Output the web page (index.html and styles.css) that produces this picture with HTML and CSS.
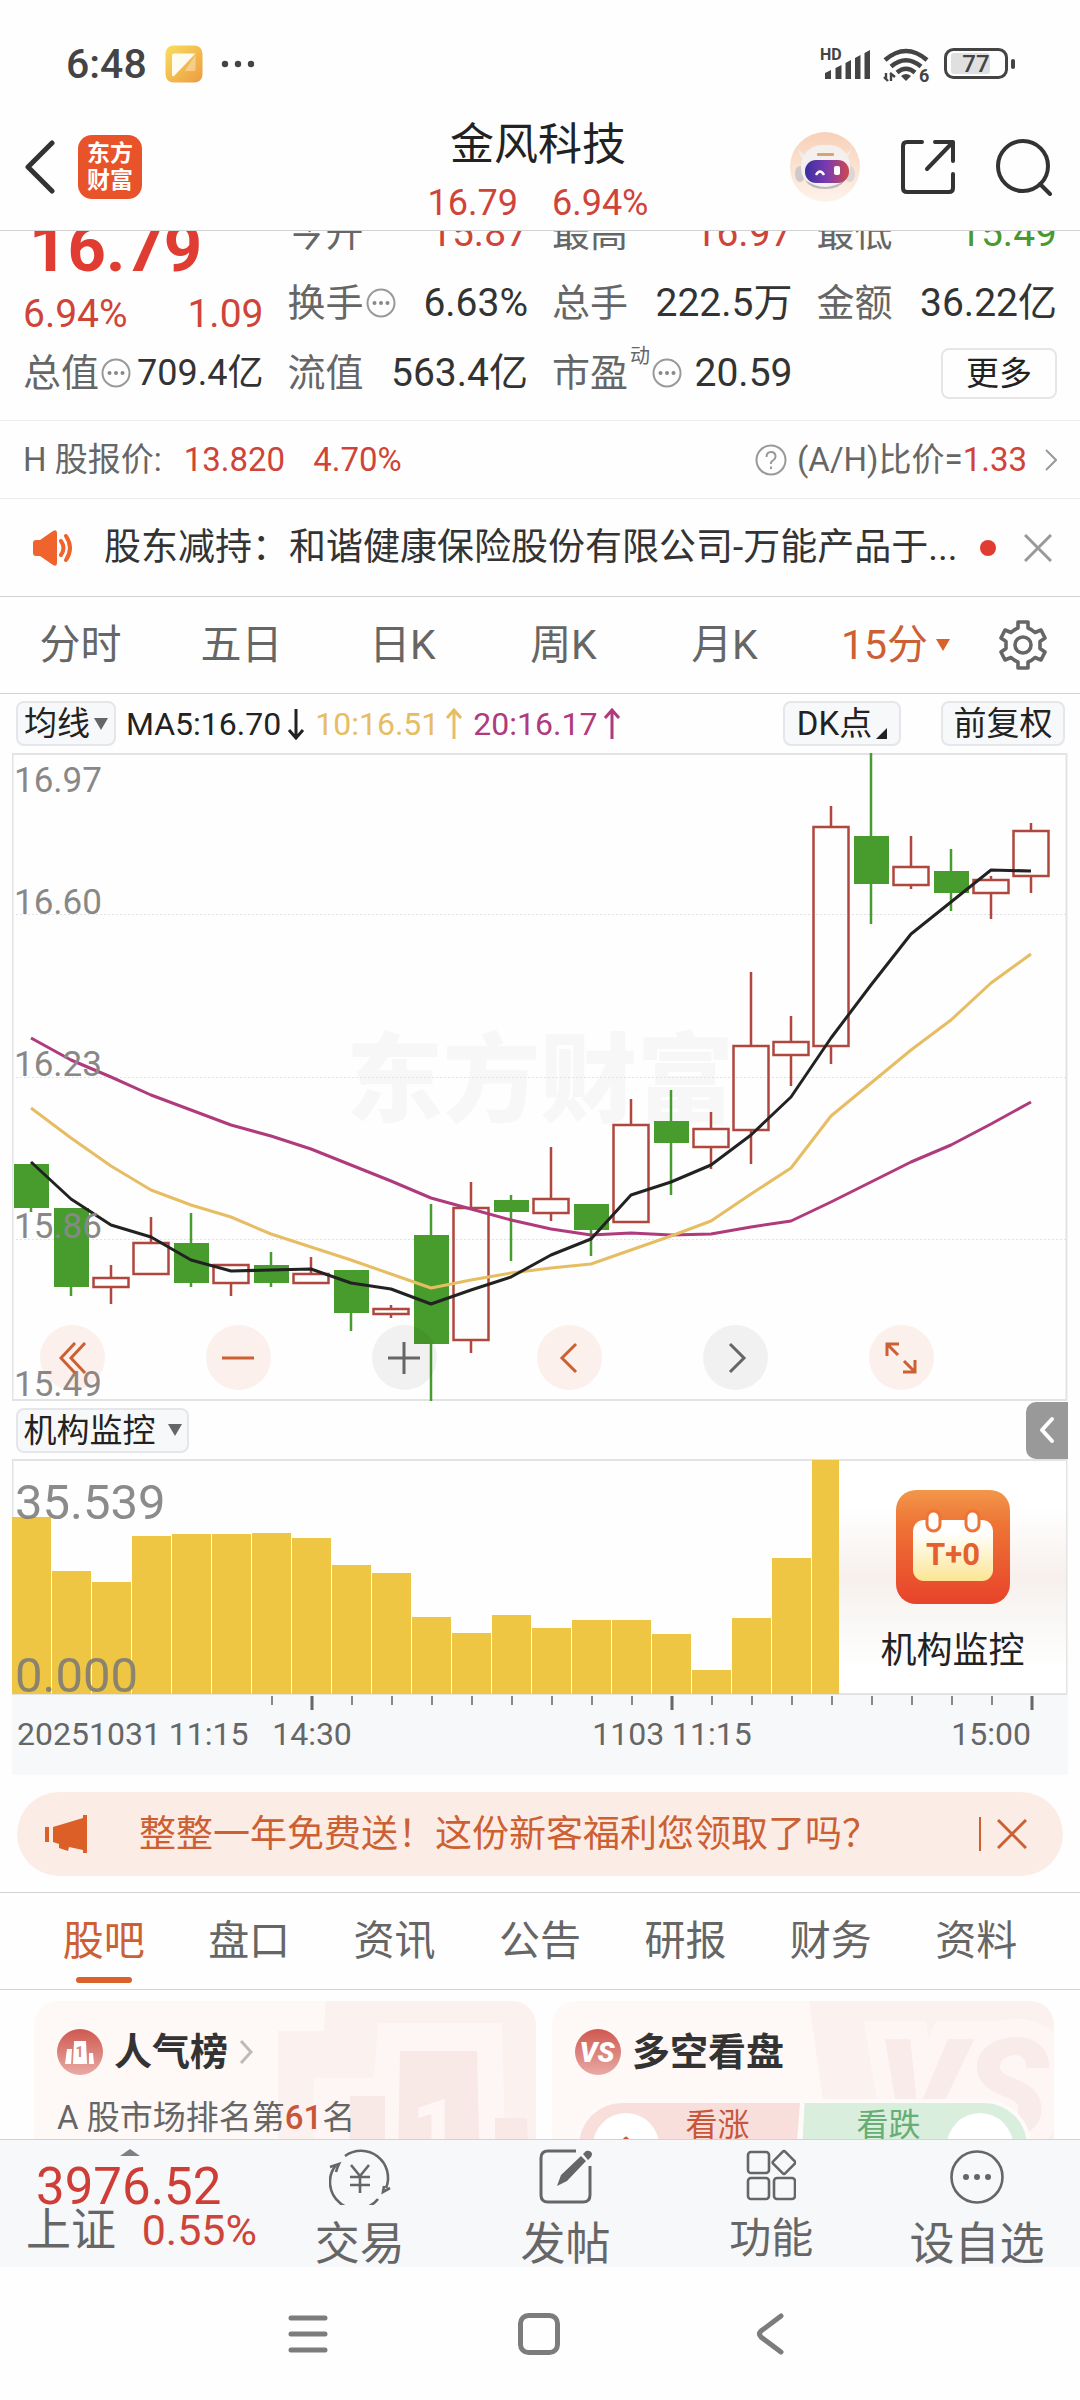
FILE: index.html
```html
<!DOCTYPE html>
<html lang="zh-CN">
<head>
<meta charset="utf-8">
<meta name="viewport" content="width=device-width, initial-scale=1">
<title>金风科技</title>
<link rel="stylesheet" href="styles.css">
</head>
<body>
<div class="app">
  <div class="status">
    <div class="status-left">
      <span class="clock">6:48</span>
      <svg width="38" height="38" viewBox="0 0 38 38"><defs><linearGradient id="note" x1="0" y1="0" x2="1" y2="1"><stop offset="0" stop-color="#f7df5c"/><stop offset="1" stop-color="#ee9a42"/></linearGradient></defs><rect width="37" height="37" x=".5" y=".5" rx="8" fill="url(#note)"/><path d="M20 26h9a1.500 1.500 0 0 0 1.500-1.500V10z" fill="#fff" opacity=".35"/><path d="M7 10.500Q7 8.500 9 8.500H30.500L9 31Q7 32 7 30z" fill="#fff" opacity=".92"/></svg>
      <svg width="34" height="8" viewBox="0 0 34 8" fill="#444"><circle cx="4" cy="4" r="3.200"/><circle cx="17" cy="4" r="3.200"/><circle cx="30" cy="4" r="3.200"/></svg>
    </div>
    <svg width="198" height="48" viewBox="818 40 198 48" fill="#444">
      <text x="820" y="60" font-size="16" font-weight="700" class="num">HD</text>
      <path d="M825 73l6-3v9h-6zM835.500 68l6-3v14h-6zM845.500 63l5.500-3v19h-5.500zM855 58l5.500-3v24H855zM864.500 53l5.500-3v29h-5.500z"/>
      <g fill="none" stroke="#444" stroke-width="4.500"><path d="M885 60Q906 42 927 60"/><path d="M891 66.500Q906 54 921 66.500"/><path d="M897 72.500Q906 65 915 72.500"/></g>
      <path d="M901 76q5-4 10 0l-5 5z"/><path d="M886 73v7M891 73v8M884 77l4 4M890 73l5 4" stroke="#444" stroke-width="2.400"/>
      <text x="919" y="82" font-size="18" font-weight="700" class="num">6</text>
      <rect x="945.500" y="49.500" width="61" height="28" rx="8" fill="none" stroke="#444" stroke-width="3"/>
      <rect x="951" y="53" width="39" height="21" rx="3" fill="#e0e0e0"/><rect x="1011" y="59" width="4" height="10" rx="2"/>
      <text x="976" y="72" font-size="24" text-anchor="middle" font-weight="500" class="num">77</text>
    </svg>
  </div>

  <header class="head">
    <div class="head-left">
      <button class="plain" aria-label="返回"><svg width="32" height="54" viewBox="0 0 32 54"><path d="M28 3L4 27L28 51" fill="none" stroke="#333" stroke-width="5" stroke-linecap="round" stroke-linejoin="round"/></svg></button>
      <a class="brand" href="#"><span>东方</span><span>财富</span></a>
    </div>
    <div class="head-mid">
      <h1>金风科技</h1>
      <div class="head-price"><span>16.79</span><span>6.94%</span></div>
    </div>
    <div class="head-right">
      <button class="plain" aria-label="智能助手"><svg width="70" height="70" viewBox="0 0 70 70"><defs><linearGradient id="av" x1="0" y1="0" x2="0" y2="1"><stop offset="0" stop-color="#f8d0b6"/><stop offset="1" stop-color="#fdf3ec"/></linearGradient><linearGradient id="vis"><stop offset="0" stop-color="#3b2f9e"/><stop offset=".5" stop-color="#7b3bb0"/><stop offset="1" stop-color="#d0484e"/></linearGradient></defs><circle cx="35" cy="35" r="35" fill="url(#av)"/><path d="M8 14q1 8 8 8v7q-8-3-8-15zM61 14q-1 8-8 8v7q8-3 8-15z" fill="#f1ece9"/><ellipse cx="10" cy="42" rx="5" ry="8" fill="#cfcaca"/><ellipse cx="60" cy="42" rx="5" ry="8" fill="#dcd6d4"/><rect x="11" y="13" width="49" height="44" rx="21" fill="#f3f0ef"/><path d="M15 48q20 14 40 0q-5 9-20 9t-20-9z" fill="#bdb9b9"/><rect x="27" y="21" width="17" height="3" rx="1" fill="#d9a36b"/><rect x="15" y="28" width="44" height="23" rx="11" fill="url(#vis)"/><path d="M26 43q4-7 8 0" fill="none" stroke="#fff" stroke-width="2.500"/><rect x="44" y="34" width="6" height="9" rx="2" fill="#fff"/></svg></button>
      <button class="plain" aria-label="分享"><svg width="54" height="56" viewBox="0 0 54 56" fill="none" stroke="#333" stroke-width="4" stroke-linecap="round" stroke-linejoin="round"><path d="M21 3H6Q2 3 2 7V49Q2 53 6 53H48Q52 53 52 49V35M34 3H52V22M51 4L26 30"/></svg></button>
      <button class="plain" aria-label="搜索"><svg width="56" height="58" viewBox="0 0 56 58" fill="none" stroke="#333" stroke-width="4" stroke-linecap="round"><circle cx="27" cy="28" r="25"/><path d="M44 46L54 56"/></svg></button>
    </div>
  </header>

  <main class="body">
    <section class="quote">
      <div class="q-main">
        <strong class="q-price">16.79</strong>
        <div class="q-change"><span>6.94%</span><span>1.09</span></div>
        <div class="q-cell"><span class="lab">总值<svg class="dots"><use href="#i-dots"/></svg></span><span class="small">709.4亿</span></div>
      </div>
      <div class="q-col">
        <div class="q-cell"><span class="lab">今开</span><span class="red">15.87</span></div>
        <div class="q-cell"><span class="lab">换手<svg class="dots"><use href="#i-dots"/></svg></span><span>6.63%</span></div>
        <div class="q-cell"><span class="lab">流值</span><span>563.4亿</span></div>
      </div>
      <div class="q-col">
        <div class="q-cell"><span class="lab">最高</span><span class="red">16.97</span></div>
        <div class="q-cell"><span class="lab">总手</span><span>222.5万</span></div>
        <div class="q-cell"><span class="lab">市盈<sup>动</sup><svg class="dots"><use href="#i-dots"/></svg></span><span>20.59</span></div>
      </div>
      <div class="q-col">
        <div class="q-cell"><span class="lab">最低</span><span class="green">15.49</span></div>
        <div class="q-cell"><span class="lab">金额</span><span>36.22亿</span></div>
        <div class="q-cell end"><button class="more">更多</button></div>
      </div>
    </section>

    <section class="hrow">
      <span>H 股报价:</span><span class="red h1">13.820</span><span class="red h2">4.70%</span>
      <a href="#" class="ratio"><svg width="32" height="32" viewBox="0 0 32 32" fill="none" stroke="#999" stroke-width="2"><circle cx="16" cy="16" r="14.500"/><path d="M11.500 13q0-5 4.500-5t4.500 4.500q0 2.500-2.500 4t-2 3.500M16 22.500v2.500"/></svg><span>(A/H)比价=<b>1.33</b></span><svg width="12" height="22" viewBox="0 0 12 22"><path d="M1 1l10 10L1 21" fill="none" stroke="#999" stroke-width="2"/></svg></a>
    </section>

    <section class="news">
      <svg width="42" height="36" viewBox="0 0 42 36"><path d="M4 10Q1 10 1 13v10q0 3 3 3h4l13 9q4 2 4-2V3q0-4-4-2L8 10z" fill="#ee642c"/><path d="M29 11q5 7 0 14M34 6q8 12 0 24" fill="none" stroke="#ee642c" stroke-width="4" stroke-linecap="round"/></svg>
      <a href="#">股东减持：和谐健康保险股份有限公司-万能产品于...</a>
      <i class="dot"></i>
      <button class="plain" aria-label="关闭"><svg width="28" height="28" viewBox="0 0 28 28"><path d="M1 1L27 27M27 1L1 27" stroke="#999" stroke-width="3"/></svg></button>
    </section>

    <nav class="periods">
      <button>分时</button><button>五日</button><button>日K</button><button>周K</button><button>月K</button>
      <button class="on">15分<svg width="14" height="12" viewBox="0 0 14 12"><path d="M0 0h14L7 12z" fill="#d9622b"/></svg></button>
      <button aria-label="设置"><svg width="48" height="50" viewBox="0 0 48 50" fill="none" stroke="#666" stroke-width="3.600" stroke-linejoin="round"><path d="M19 2h10v6q4 1.500 7 4.500l6-2.500 4 8-5 3.500v7l5 3.500-4 8-6-2.500q-3 3-7 4.500v6H19v-6q-4-1.500-7-4.500l-6 2.500-4-8 5-3.500v-7l-5-3.500 4-8 6 2.500q3-3 7-4.500z"/><circle cx="24" cy="25" r="8"/></svg></button>
    </nav>

    <section class="ind">
      <button class="chip">均线<svg width="14" height="12" viewBox="0 0 14 12"><path d="M0 0h14L7 12z" fill="#666"/></svg></button>
      <span class="ma">MA5:16.70<svg width="18" height="32" viewBox="0 0 18 32"><path d="M9 1v29M2 22l7 8 7-8" fill="none" stroke="currentColor" stroke-width="3"/></svg></span>
      <span class="ma gold">10:16.51<svg width="18" height="32" viewBox="0 0 18 32"><path d="M9 31V2M2 10l7-8 7 8" fill="none" stroke="currentColor" stroke-width="3"/></svg></span>
      <span class="ma pink">20:16.17<svg width="18" height="32" viewBox="0 0 18 32"><path d="M9 31V2M2 10l7-8 7 8" fill="none" stroke="currentColor" stroke-width="3"/></svg></span>
      <button class="chip dk">DK点<svg width="11" height="11" viewBox="0 0 11 11"><path d="M11 0v11H0z" fill="#222"/></svg></button>
      <button class="chip fq">前复权</button>
    </section>

    <section class="chart">
      <svg class="plot" viewBox="12 753 1056 648">
        <text x="346" y="1114" class="mark">东方财富</text>
        <g stroke="#e3e3e3" stroke-dasharray="2 2"><path d="M12 914.500H1068M12 1077.500H1068M12 1239.500H1068"/></g>
        <rect x="12.500" y="754" width="1054" height="646" fill="none" stroke="#e3e3e3" stroke-width="2"/>
        <g fill="none" stroke="#b0473f" stroke-width="2.500">
          <path d="M111 1265V1278M111 1287V1304M151 1217V1243M231 1283V1296M311 1257V1274M391 1305V1309M391 1314V1318M471 1182V1208M471 1340V1353M551 1147V1199M551 1213V1221M631 1099V1125M711 1112V1129M711 1147V1169M751 972V1046M751 1130V1164M791 1016V1042M791 1055V1086M831 806V827M831 1046V1064M911 836V867M911 885V889M991 876V880M991 893V919M1031 823V831M1031 876V893"/>
          <rect x="93.500" y="1278" width="35" height="9"/><rect x="133.500" y="1243" width="35" height="31"/><rect x="213.500" y="1265" width="35" height="18"/><rect x="293.500" y="1274" width="35" height="9"/><rect x="373.500" y="1309" width="35" height="5"/><rect x="453.500" y="1208" width="35" height="132"/><rect x="533.500" y="1199" width="35" height="14"/><rect x="613.500" y="1125" width="35" height="97"/><rect x="693.500" y="1129" width="35" height="18"/><rect x="733.500" y="1046" width="35" height="84"/><rect x="773.500" y="1042" width="35" height="13"/><rect x="813.500" y="827" width="35" height="219"/><rect x="893.500" y="867" width="35" height="18"/><rect x="973.500" y="880" width="35" height="13"/><rect x="1013.500" y="831" width="35" height="45"/>
        </g>
        <g fill="#489c2d" stroke="none">
          <rect x="14" y="1164" width="35" height="44"/><rect x="54" y="1208" width="35" height="79"/><rect x="174" y="1243" width="35" height="40"/><rect x="254" y="1265" width="35" height="18"/><rect x="334" y="1270" width="35" height="43"/><rect x="414" y="1235" width="35" height="109"/><rect x="494" y="1200" width="35" height="12"/><rect x="574" y="1204" width="35" height="26"/><rect x="654" y="1121" width="35" height="22"/><rect x="854" y="836" width="35" height="48"/><rect x="934" y="871" width="35" height="22"/>
        </g>
        <path d="M31 1164V1212M71 1208V1296M191 1213V1287M271 1252V1287M351 1270V1331M431 1204V1401M511 1195V1261M591 1204V1256M671 1090V1195M871 753V924M951 849V911" stroke="#489c2d" stroke-width="2.500"/>
        <g fill="none" stroke-width="3" stroke-linejoin="round">
          <polyline stroke="#b03b7c" points="31,1038 71,1060 111,1077 151,1095 191,1110 231,1125 271,1136 311,1149 351,1165 391,1181 431,1198 471,1209 511,1220 551,1229 591,1235 631,1233 671,1235 711,1234 751,1227 791,1221 831,1202 871,1182 911,1162 951,1145 991,1124 1031,1102"/>
          <polyline stroke="#e7bd63" points="31,1108 71,1138 111,1166 151,1190 191,1205 231,1217 271,1234 311,1247 351,1260 391,1274 431,1288 471,1280 511,1273 551,1268 591,1264 631,1250 671,1236 711,1221 751,1194 791,1168 831,1116 871,1083 911,1050 951,1020 991,983 1031,954"/>
          <polyline stroke="#222" points="31,1162 71,1199 111,1225 151,1237 191,1260 231,1271 271,1270 311,1269 351,1283 391,1289 431,1304 471,1290 511,1277 551,1255 591,1239 631,1195 671,1182 711,1165 751,1135 791,1097 831,1038 871,985 911,934 951,902 991,870 1031,871"/>
        </g>
        <g class="price"><text x="14" y="792">16.97</text><text x="14" y="914">16.60</text><text x="14" y="1076">16.23</text><text x="14" y="1238">15.86</text><text x="14" y="1396">15.49</text></g>
      </svg>
      <div class="tools">
        <button aria-label="最左"><svg width="28" height="32" viewBox="0 0 28 32"><path d="M16 1L2 16l14 15M26 1L12 16l14 15"/></svg></button>
        <button aria-label="缩小"><svg width="32" height="32" viewBox="0 0 32 32"><path d="M0 16h32"/></svg></button>
        <button class="off" aria-label="放大"><svg width="32" height="32" viewBox="0 0 32 32"><path d="M0 16h32M16 0v32"/></svg></button>
        <button aria-label="左移"><svg width="32" height="32" viewBox="0 0 32 32"><path d="M22 2L8 16l14 14"/></svg></button>
        <button class="off" aria-label="右移"><svg width="32" height="32" viewBox="0 0 32 32"><path d="M10 2l14 14-14 14"/></svg></button>
        <button aria-label="全屏"><svg width="32" height="32" viewBox="0 0 32 32"><path d="M14 2H2v12M2 2l11 11M18 30h12V18M30 30L19 19"/></svg></button>
      </div>
    </section>

    <section class="sub-head">
      <button class="chip org">机构监控<svg width="14" height="12" viewBox="0 0 14 12"><path d="M0 0h14L7 12z" fill="#666"/></svg></button>
      <button class="fold" aria-label="展开"><svg width="16" height="28" viewBox="0 0 16 28"><path d="M13 3L3 14l10 11" fill="none" stroke="#fff" stroke-width="4" stroke-linecap="round" stroke-linejoin="round"/></svg></button>
    </section>

    <section class="chart">
      <svg class="plot" viewBox="12 1459 1056 316">
        <rect x="12" y="1695" width="1056" height="80" fill="#f7f8fa"/>
        <rect x="12.500" y="1460" width="1054" height="234" fill="none" stroke="#e3e3e3" stroke-width="2"/>
        <path fill="#efc544" d="M12 1517h39v177h-39zM52 1571h39v123h-39zM92 1582h39v112h-39zM132 1536h39v158h-39zM172 1534h39v160h-39zM212 1534h39v160h-39zM252 1533h39v161h-39zM292 1538h39v156h-39zM332 1565h39v129h-39zM372 1573h39v121h-39zM412 1617h39v77h-39zM452 1633h39v61h-39zM492 1615h39v79h-39zM532 1628h39v66h-39zM572 1620h39v74h-39zM612 1620h39v74h-39zM652 1634h39v60h-39zM692 1670h39v24h-39zM732 1618h39v76h-39zM772 1558h39v136h-39zM812 1460h27v234h-27z"/>
        <path stroke="#888" stroke-width="2" d="M272 1696v9M352 1696v9M392 1696v9M432 1696v9M472 1696v9M512 1696v9M552 1696v9M592 1696v9M632 1696v9M712 1696v9M752 1696v9M792 1696v9M832 1696v9M872 1696v9M912 1696v9M952 1696v9M992 1696v9"/>
        <path stroke="#666" stroke-width="3" d="M312 1696v14M672 1696v14M1032 1696v14"/>
        <g class="vol"><text x="15" y="1519">35.539</text><text x="15" y="1692">0.000</text></g>
        <g class="dates"><text x="17" y="1745">20251031 11:15</text><text x="312" y="1745" text-anchor="middle">14:30</text><text x="672" y="1745" text-anchor="middle">1103 11:15</text><text x="1031" y="1745" text-anchor="end">15:00</text></g>
      </svg>
      <a class="t0" href="#">
        <svg width="114" height="114" viewBox="0 0 114 114"><defs><linearGradient id="tb" x1="0" y1="0" x2="0" y2="1"><stop offset="0" stop-color="#f2974a"/><stop offset=".3" stop-color="#ee7435"/><stop offset="1" stop-color="#e8432b"/></linearGradient><linearGradient id="tc" x1="0" y1="0" x2="0" y2="1"><stop offset=".2" stop-color="#fff"/><stop offset="1" stop-color="#fbe593"/></linearGradient></defs><rect width="114" height="114" rx="20" fill="url(#tb)"/><rect x="17" y="30" width="80" height="61" rx="11" fill="url(#tc)"/><rect x="31" y="21" width="13" height="20" rx="6.500" fill="#fff" stroke="#ee7435" stroke-width="3"/><rect x="70" y="21" width="13" height="20" rx="6.500" fill="#fff" stroke="#ee7435" stroke-width="3"/><text x="57" y="75" text-anchor="middle" font-size="31" font-weight="700" fill="#e5602e" class="num">T+0</text></svg>
        <span>机构监控</span>
      </a>
    </section>

    <section class="promo">
      <svg width="42" height="38" viewBox="0 0 42 38" fill="#db5f27"><path d="M0 12h4v15H0zM8 12L38 3V0h4v38h-4v-3l-14-3-1 4-9-3v-4l-6-2z"/></svg>
      <a href="#">整整一年免费送！这份新客福利您领取了吗？</a>
      <button class="plain" aria-label="关闭"><svg width="30" height="30" viewBox="0 0 30 30"><path d="M1 1L29 29M29 1L1 29" stroke="#cd6032" stroke-width="3"/></svg></button>
    </section>

    <nav class="tabs">
      <a href="#" class="on">股吧</a><a href="#">盘口</a><a href="#">资讯</a><a href="#">公告</a><a href="#">研报</a><a href="#">财务</a><a href="#">资料</a>
    </nav>

    <section class="cards">
      <article class="card">
        <svg class="deco" width="502" height="220" viewBox="34 2001 502 220"><path d="M326 2001H536V2221H278V2031H324z" fill="#fbf1ef"/><path d="M378 2023H502L507 2221H312L314 2078H374z" fill="#fdf6f4"/><path d="M400 2051H477L481 2221H397zM350 2096H385V2221H348zM495 2118H527L530 2221H495z" fill="#f8e9e7"/><text x="412" y="2156" font-size="80" font-weight="900" fill="#fdf6f4" class="num">1</text></svg>
        <h2><svg width="46" height="46" viewBox="0 0 46 46"><defs><linearGradient id="rd" x1="0" y1="0" x2="0" y2="1"><stop offset="0" stop-color="#cf5850"/><stop offset="1" stop-color="#e8aaa5"/></linearGradient></defs><circle cx="23" cy="23" r="23" fill="url(#rd)"/><path d="M17 12h12l1 23H16zM10 20h5l-1 15H8zM32 24h4l1 11h-5z" fill="#fff"/><text x="22.500" y="28" font-size="14" font-weight="700" text-anchor="middle" fill="#d98680" class="num">1</text></svg>人气榜<svg width="14" height="24" viewBox="0 0 14 24"><path d="M2 1l10 11L2 23" fill="none" stroke="#bbb" stroke-width="3"/></svg></h2>
        <p>A 股市场排名第<b>61</b>名</p>
      </article>
      <article class="card">
        <svg class="deco" width="502" height="220" viewBox="552 2001 502 220"><path d="M809 2001H1054V2221H840z" fill="#fbf1ef"/><text x="876" y="2138" font-size="138" font-weight="900" font-style="italic" stroke="#fdf6f4" stroke-width="36" fill="#fdf6f4" class="num">VS</text><text x="876" y="2138" font-size="138" font-weight="900" font-style="italic" fill="#f9ebe9" class="num">VS</text></svg>
        <h2><svg width="46" height="46" viewBox="0 0 46 46"><circle cx="23" cy="23" r="23" fill="url(#rd)"/><text x="22" y="33" font-size="28" font-weight="900" font-style="italic" text-anchor="middle" fill="#fff" class="num">VS</text></svg>多空看盘</h2>
        <div class="vote">
          <button class="up"><i><svg width="24" height="20" viewBox="0 0 24 20"><path d="M12 2L3 11h18zM9 11h6v7H9z" fill="#c8573a" stroke="#c8573a" stroke-linejoin="round" stroke-width="3"/></svg></i><span>看涨</span></button>
          <button class="down"><span>看跌</span><i><svg width="24" height="20" viewBox="0 0 24 20"><path d="M12 19L2 10h20zM8 3h8v7H8z" fill="#67ad76"/></svg></i></button>
        </div>
      </article>
    </section>
  </main>

  <footer class="bar">
    <a href="#" class="index">
      <svg width="20" height="7" viewBox="0 0 20 7"><path d="M0 7L10 0l10 7z" fill="#7d7f85"/></svg>
      <strong>3976.52</strong>
      <span class="idx"><em>上证</em><span>0.55%</span></span>
    </a>
    <a href="#"><svg width="62" height="56" viewBox="0 0 62 56" fill="none" stroke="#666" stroke-width="2.600"><path d="M16 7A27 27 0 0 1 57 39M1 18l9-3q-2 4-3 8M54 42q1-3 1-5M61 39l-7 4 1-6"/><path d="M7 16A27 27 0 0 0 49 50"/><path d="M22 16l9 11 9-11M31 27v17M21 28h20M21 36h20"/></svg>交易</a>
    <a href="#"><svg width="54" height="56" viewBox="0 0 54 56"><path d="M37 2H9Q2 2 2 9v37q0 7 7 7h35q7 0 7-7V17" fill="none" stroke="#666" stroke-width="3"/><path d="M18 37l4-11L42 7l5 5-19 20zM44 5l3-3q3-1 5 1t0 5l-3 3z" fill="#666"/></svg>发帖</a>
    <a href="#" class="fn"><svg width="50" height="52" viewBox="0 0 50 52" fill="none" stroke="#666" stroke-width="2.600"><rect x="2" y="3" width="21" height="21" rx="3"/><rect x="2" y="29" width="21" height="21" rx="3"/><rect x="28" y="29" width="21" height="21" rx="3"/><rect x="29.500" y="5" width="17" height="17" rx="2" transform="rotate(45 38 13.500)"/></svg>功能</a>
    <a href="#"><svg width="54" height="56" viewBox="0 0 54 56"><circle cx="27" cy="28" r="25.500" fill="none" stroke="#666" stroke-width="2.600"/><g fill="#666"><circle cx="16" cy="28" r="3"/><circle cx="27" cy="28" r="3"/><circle cx="38" cy="28" r="3"/></g></svg>设自选</a>
  </footer>

  <nav class="sys">
    <button class="plain" aria-label="最近任务"><svg width="40" height="40" viewBox="0 0 40 40"><path d="M3 4h34M3 20h34M3 36h34" stroke="#7c7c7c" stroke-width="5" stroke-linecap="round"/></svg></button>
    <button class="plain" aria-label="主页"><svg width="42" height="42" viewBox="0 0 42 42"><rect x="2.500" y="2.500" width="37" height="37" rx="8" fill="none" stroke="#7c7c7c" stroke-width="5"/></svg></button>
    <button class="plain" aria-label="返回"><svg width="42" height="42" viewBox="0 0 42 42"><path d="M31 3L11 18q-3 3 0 6L31 39" fill="none" stroke="#7c7c7c" stroke-width="5" stroke-linecap="round"/></svg></button>
  </nav>
</div>
<svg width="0" height="0" class="defs"><symbol id="i-dots" viewBox="0 0 30 30"><circle cx="15" cy="15" r="13.500" fill="none" stroke="#999" stroke-width="2"/><g fill="#888"><circle cx="8.500" cy="15" r="2"/><circle cx="15" cy="15" r="2"/><circle cx="21.500" cy="15" r="2"/></g></symbol></svg>
</body>
</html>
```
FILE: styles.css
```css
* { box-sizing: border-box; }
body {
  margin: 0;
  background: #fefefe;
  color: #333;
  font-family: Roboto, "Noto Sans CJK SC", sans-serif;
  font-size: 36px;
  line-height: 1;
}
button { font: inherit; color: inherit; background: none; border: 0; padding: 0; margin: 0; }
a { color: inherit; text-decoration: none; }
h1, h2, p { margin: 0; font-weight: 400; }
svg { display: block; flex: none; }
.num { font-family: Roboto, sans-serif; }
.plain { display: flex; align-items: center; }
.defs { position: absolute; }
.red { color: #cf4439; }
.green { color: #489a2c; }

.app { display: flex; flex-direction: column; height: 100vh; overflow: hidden; }

.status { display: flex; justify-content: space-between; align-items: center; height: 104px; padding: 24px 64px 0 66px; flex: none; }
.status-left { display: flex; align-items: center; gap: 18px; color: #444; }
.clock { font-size: 41px; font-weight: 500; }

.head { display: grid; grid-template-columns: 1fr auto 1fr; align-items: center; height: 127px; padding: 0 28px 0 24px; border-bottom: 1px solid #d2d2d2; flex: none; }
.head-left { display: flex; align-items: center; gap: 22px; }
.brand { display: flex; flex-direction: column; align-items: center; justify-content: center; gap: 4px; width: 64px; height: 64px; border-radius: 14px; background: #e9532a; color: #fff; font-size: 23px; font-weight: 700; }
.head-mid { padding-top: 10px; text-align: center; }
h1 { font-size: 44px; color: #222; }
.head-price { display: flex; justify-content: center; gap: 34px; margin-top: 18px; color: #cf4439; font-size: 36px; }
.head-right { display: flex; justify-content: flex-end; align-items: center; gap: 41px; }

.body { flex: 1; min-height: 0; overflow: hidden; }

.quote { display: grid; grid-template-columns: repeat(4, 1fr); gap: 24px; margin-top: -33px; padding: 0 23px 12px; border-bottom: 1px solid #ececec; font-size: 39px; }
.q-cell { display: flex; justify-content: space-between; align-items: center; height: 70px; white-space: nowrap; }
.q-cell.end { justify-content: flex-end; }
.lab { display: flex; align-items: center; gap: 2px; color: #666; font-size: 38px; }
.lab sup { align-self: flex-start; margin-top: -8px; font-size: 20px; line-height: 1; }
.dots { width: 30px; height: 30px; }
.small { font-size: 36px; }
.q-main { display: flex; flex-direction: column; color: #333; }
.q-price { display: flex; align-items: flex-end; height: 84px; padding-left: 6px; color: #e03c32; font-size: 67px; font-weight: 700; }
.q-change { display: flex; justify-content: space-between; align-items: flex-end; height: 56px; padding-bottom: 4px; color: #cf4439; }
.more { width: 116px; height: 51px; border: 2px solid #e6e6e6; border-radius: 8px; font-size: 33px; color: #222; }

.hrow { display: flex; align-items: center; height: 78px; padding: 0 23px; border-bottom: 1px solid #ececec; color: #666; font-size: 33px; }
.h1 { margin-left: 22px; }
.h2 { margin-left: 28px; }
.ratio { display: flex; align-items: center; gap: 10px; margin-left: auto; }
.ratio b { font-weight: 400; color: #cf4439; }
.ratio svg:last-child { margin-left: 8px; }

.news { display: flex; align-items: center; height: 98px; padding: 0 28px 0 32px; border-bottom: 1px solid #d2d2d2; font-size: 37px; }
.news a { flex: 1; min-width: 0; margin-left: 30px; white-space: nowrap; line-height: 56px; }
.dot { width: 16px; height: 16px; margin: 0 28px 0 16px; border-radius: 50%; background: #e03c32; }

.periods { display: grid; grid-template-columns: repeat(6, 1fr) 114px; align-items: center; height: 97px; border-bottom: 1px solid #d2d2d2; color: #666; font-size: 41px; }
.periods button { display: flex; justify-content: center; align-items: center; gap: 8px; }
.periods .on { padding-left: 20px; color: #cd6032; }

.ind { display: flex; align-items: center; height: 59px; padding: 0 15px 0 16px; font-size: 32px; color: #222; }
.chip { display: flex; align-items: center; justify-content: center; gap: 4px; height: 45px; border: 2px solid #e4e6ea; border-radius: 8px; background: #f7f8fa; color: #222; font-size: 33px; white-space: nowrap; padding: 0 6px; }
.ma { display: flex; align-items: center; gap: 6px; margin-left: 10px; }
.gold { color: #e7bd63; }
.pink { color: #b03b7c; }
.dk { align-items: center; width: 118px; margin-left: auto; padding: 0 4px; }
.dk svg { align-self: flex-end; margin-bottom: 5px; }
.fq { width: 124px; margin-left: 40px; }

.chart { position: relative; padding: 0 12px; }
.plot { width: 100%; height: auto; font-family: Roboto, "Noto Sans CJK SC", sans-serif; }
.mark { font-size: 97px; font-weight: 900; fill: #f7f7f7; }
.price { font-size: 35px; fill: #888; }
.vol { font-size: 49px; fill: #777; fill-opacity: .85; }
.dates { font-size: 32px; fill: #666; }
.tools { position: absolute; left: 40px; right: 146px; bottom: 11px; display: flex; justify-content: space-between; }
.tools button { display: flex; align-items: center; justify-content: center; width: 65px; height: 65px; border-radius: 50%; background: rgba(217, 98, 43, .09); color: #cd6032; }
.tools .off { background: rgba(0, 0, 0, .05); color: #666; }
.tools svg { fill: none; stroke: currentColor; stroke-width: 3; }

.sub-head { display: flex; justify-content: space-between; align-items: center; height: 58px; padding: 0 12px 0 16px; }
.org { width: 173px; padding: 0; gap: 12px; }
.fold { display: flex; align-items: center; justify-content: center; width: 42px; height: 57px; border-radius: 10px 0 0 10px; background: #999; }
.t0 { position: absolute; right: 14px; top: 2px; width: 227px; height: 232px; display: flex; flex-direction: column; align-items: center; padding-top: 29px; gap: 29px; background: linear-gradient(#fff 20%, #f7f0ed 50%, #f9f8f6 70%, #fff 90%); color: #222; font-size: 36px; }

.promo { display: flex; align-items: center; height: 84px; margin: 17px 17px 16px; padding: 0 36px 0 28px; border-radius: 42px; background: #fbede6; color: #cd6032; font-size: 37px; }
.promo a { flex: 1; margin-left: 52px; white-space: nowrap; }
.promo button { padding-left: 16px; height: 34px; border-left: 2px solid #cd6032; }

.tabs { display: grid; grid-template-columns: repeat(7, 1fr); height: 98px; padding: 0 31px; border-top: 1px solid #d2d2d2; border-bottom: 1px solid #d2d2d2; color: #666; font-size: 41px; }
.tabs a { display: flex; align-items: center; justify-content: center; position: relative; }
.tabs .on { color: #cd6032; }
.tabs .on::after { content: ""; position: absolute; bottom: 6px; width: 56px; height: 6px; border-radius: 3px; background: #d9622b; }

.cards { display: grid; grid-template-columns: 1fr 1fr; gap: 16px; padding: 11px 26px 0 34px; }
.card { position: relative; height: 220px; padding: 28px 23px 0; border-radius: 24px; background: #fef8f6; overflow: hidden; }
.deco { position: absolute; right: 0; top: 0; }
.card h2 { position: relative; display: flex; align-items: center; gap: 11px; height: 46px; font-size: 38px; font-weight: 700; }
.card p { position: relative; margin-top: 26px; color: #666; font-size: 33px; }
.card b { color: #c8573a; font-weight: 500; }
.vote { position: relative; display: flex; margin-top: 24px; height: 94px; border: 4px solid #fffafa; border-radius: 47px; background: #fffafa; overflow: hidden; }
.vote button { flex: 1; display: flex; align-items: flex-start; font-size: 32px; }
.vote i { display: flex; align-items: center; justify-content: center; width: 66px; height: 66px; margin: 10px 14px 0; border-radius: 50%; background: #fff; }
.vote span { flex: 1; margin-top: 6px; text-align: center; }
.up { background: #f8dfdc; color: #c8573a; clip-path: polygon(0 0, 100% 0, 97% 100%, 0 100%); padding-right: 38px; }
.down { background: #daeedd; color: #67ad76; clip-path: polygon(2% 0, 100% 0, 100% 100%, 0 100%); padding-left: 44px; }

.bar { display: grid; grid-template-columns: 257px repeat(4, 1fr); flex: none; height: 128px; border-top: 1px solid #d2d2d2; background: #f7f8fa; color: #666; font-size: 45px; }
.bar a { display: flex; flex-direction: column; align-items: center; padding-top: 9px; gap: 17px; }
.bar .fn { font-size: 42px; }
.bar .index { gap: 5px; align-items: stretch; }
.index svg { margin-left: 120px; }
.index strong { margin-left: 36px; color: #cf3e36; font-size: 51px; font-weight: 400; }
.idx { display: flex; align-items: center; justify-content: space-between; margin-top: -9px; padding-left: 26px; color: #cf4439; font-size: 43px; }
.idx em { font-style: normal; font-size: 45px; color: #666; }

.sys { display: flex; align-items: center; justify-content: center; gap: 190px; height: 133px; flex: none; }
```
